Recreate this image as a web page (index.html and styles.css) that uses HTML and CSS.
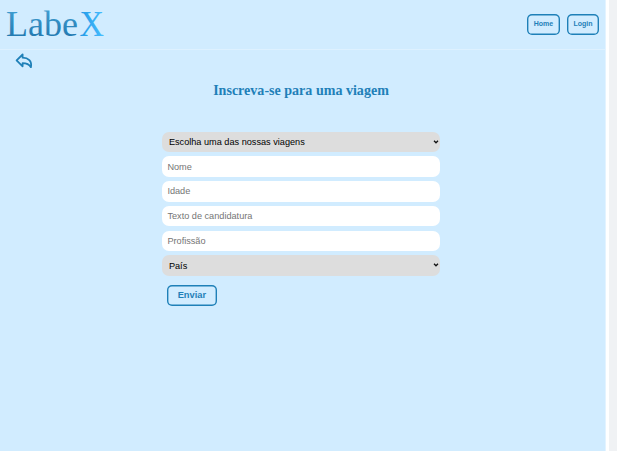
FILE: index.html
```html
<!DOCTYPE html>
<html lang="pt-BR">
<head>
<meta charset="utf-8">
<title>LabeX</title>
<link rel="stylesheet" href="styles.css">
</head>
<body>
<div class="page">
  <header class="header">
    <svg class="logo" width="110" height="49" viewBox="0 0 110 49" role="img" aria-label="LabeX">
      <defs>
        <linearGradient id="ink" x1="0" y1="0" x2="0" y2="1">
          <stop offset="0" stop-color="#45a5d8"/>
          <stop offset="1" stop-color="#1c70a8"/>
        </linearGradient>
        <linearGradient id="sky" x1="0" y1="0" x2="1" y2="0">
          <stop offset="0" stop-color="#2199e6"/>
          <stop offset="1" stop-color="#48beff"/>
        </linearGradient>
      </defs>
      <text x="6" y="36.2" textLength="72" fill="url(#ink)">Labe</text>
      <text x="79.5" y="36.2" textLength="24.5" lengthAdjust="spacingAndGlyphs" fill="url(#sky)">X</text>
    </svg>
    <nav class="nav">
      <button class="btn nav-btn">Home</button>
      <button class="btn nav-btn">Login</button>
    </nav>
  </header>
  <main class="main">
    <svg class="back" width="18" height="16" viewBox="0 0 18 16" role="img" aria-label="Voltar">
      <path d="M1.6 7.4 7.6 1.5V4.7C13.2 4.8 17.2 8.2 15.9 14.2 14 11.1 11.2 10.2 7.6 10.2V13.3Z"/>
    </svg>
    <h1 class="title">Inscreva-se para uma viagem</h1>
    <form class="form">
      <div class="select-wrap">
        <select class="field select"><option>Escolha uma das nossas viagens</option></select>
        <svg class="chevron" width="6" height="4" viewBox="0 0 6 4"><path d="M1 .8 3 2.8 5 .8"/></svg>
      </div>
      <input class="field" placeholder="Nome">
      <input class="field" placeholder="Idade">
      <input class="field" placeholder="Texto de candidatura">
      <input class="field" placeholder="Profissão">
      <div class="select-wrap">
        <select class="field select"><option>País</option></select>
        <svg class="chevron" width="6" height="4" viewBox="0 0 6 4"><path d="M1 .8 3 2.8 5 .8"/></svg>
      </div>
      <button class="btn submit" type="button">Enviar</button>
    </form>
  </main>
</div>
<div class="gutter"></div>
</body>
</html>
```
FILE: styles.css
```css
* { box-sizing: border-box; }
body {
  margin: 0;
  height: 451px;
  display: flex;
  background: #fff;
  overflow: hidden;
  font-family: "Liberation Sans", Arial, sans-serif;
}
.page {
  width: 606px;
  height: 451px;
  background: #d1ecff;
  border-right: 1px solid #e3f3ff;
}
.gutter {
  margin-left: 3px;
  width: 8px;
  background: #f0f2f4;
}
.header {
  height: 50px;
  display: flex;
  justify-content: space-between;
  align-items: flex-start;
  border-bottom: 1px solid #def1ff;
}
.logo text {
  font-family: "Liberation Serif", "Times New Roman", serif;
  font-size: 36px;
}
.nav {
  display: flex;
  gap: 7px;
  padding: 14px 6px 0 0;
}
.btn {
  margin: 0;
  padding: 0;
  border: 0;
  box-shadow: inset 0 0 0 1.4px #1f80b8;
  border-radius: 5px;
  background: transparent;
  color: #1f80b8;
  font-family: inherit;
  font-weight: bold;
}
.nav-btn {
  width: 32px;
  height: 21px;
  padding-bottom: 2px;
  font-size: 7px;
}
.nav-btn:first-child { width: 33px; }
.main {
  display: flex;
  flex-direction: column;
}
.back {
  margin: 3px 0 0 15px;
  fill: none;
  stroke: #1f80b8;
  stroke-width: 1.8;
  stroke-linejoin: round;
}
.title {
  margin: 13px 0 0;
  padding-right: 3px;
  text-align: center;
  font: bold 14.05px/16px "Liberation Serif", "Times New Roman", serif;
  color: #1f80b8;
}
.form {
  width: 277.4px;
  margin: 33.7px 0 0 162.4px;
  display: flex;
  flex-direction: column;
  gap: 4.15px;
}
.field {
  display: block;
  width: 100%;
  height: 20.6px;
  margin: 0;
  padding: 0 5px;
  border: 0;
  border-radius: 7px;
  background: #fff;
  color: #000;
  font-family: inherit;
  font-size: 9.17px;
}
.field::placeholder { color: #757575; }
.select-wrap { position: relative; }
.select {
  appearance: none;
  padding: 0 6.5px;
  background: #ddd;
}
.chevron {
  position: absolute;
  right: 1px;
  top: 8px;
  fill: none;
  stroke: #111;
  stroke-width: 1.3;
}
.submit {
  width: 50px;
  height: 21px;
  margin: 4.8px 0 0 4.5px;
  font-size: 9.3px;
}
```
